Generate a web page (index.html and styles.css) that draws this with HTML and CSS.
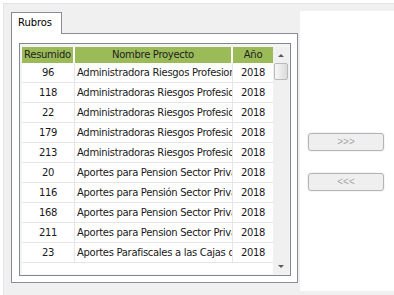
FILE: index.html
```
<!DOCTYPE html>
<html lang="es">
<head>
    <meta charset="UTF-8">
    <meta name="viewport" content="width=device-width, initial-scale=1.0">
    <title>Rubros</title>
    <link rel="stylesheet" href="styles.css">
</head>
<body>
    <div class="frame">
        <div class="main">
            <div class="tabs">
                <div class="strip">
                    <div class="tab">Rubros</div>
                    <div class="fill"></div>
                </div>
                <div class="panel">
                    <div class="grid-box">
                        <div class="grid-view">
                            <table class="grid">
                                <colgroup>
                                    <col class="c-num">
                                    <col class="c-name">
                                    <col class="c-year">
                                </colgroup>
                                <thead>
                                    <tr><th>Resumido</th><th>Nombre Proyecto</th><th>Año</th></tr>
                                </thead>
                                <tbody>
                                    <tr><td>96</td><td class="name">Administradora Riesgos Profesionales</td><td>2018</td></tr>
                                    <tr><td>118</td><td class="name">Administradoras Riesgos Profesionales</td><td>2018</td></tr>
                                    <tr><td>22</td><td class="name">Administradoras Riesgos Profesionales</td><td>2018</td></tr>
                                    <tr><td>179</td><td class="name">Administradoras Riesgos Profesionales</td><td>2018</td></tr>
                                    <tr><td>213</td><td class="name">Administradoras Riesgos Profesionales</td><td>2018</td></tr>
                                    <tr><td>20</td><td class="name">Aportes para Pension Sector Privado</td><td>2018</td></tr>
                                    <tr><td>116</td><td class="name">Aportes para Pensión Sector Privado</td><td>2018</td></tr>
                                    <tr><td>168</td><td class="name">Aportes para Pension Sector Privado</td><td>2018</td></tr>
                                    <tr><td>211</td><td class="name">Aportes para Pension Sector Privado</td><td>2018</td></tr>
                                    <tr><td>23</td><td class="name">Aportes Parafiscales a las Cajas de Compensación</td><td>2018</td></tr>
                                </tbody>
                            </table>
                        </div>
                        <div class="vscroll">
                            <div class="arrow"><span class="tri up"></span></div>
                            <div class="thumb"></div>
                            <div class="track"></div>
                            <div class="arrow"><span class="tri down"></span></div>
                        </div>
                    </div>
                </div>
            </div>
            <div class="side">
                <button class="move">&gt;&gt;&gt;</button>
                <button class="move">&lt;&lt;&lt;</button>
            </div>
        </div>
    </div>
</body>
</html>
```

FILE: styles.css
```
* {
    box-sizing: border-box;
}
html, body {
    margin: 0;
    background: #fff;
}
body {
    font-family: "DejaVu Sans", sans-serif;
    font-size: 10px;
    color: #1a1a1a;
}
.frame {
    margin: 3px 0 0 3px;
    height: 292px;
    border-top: 1px solid #e3e3e3;
    border-left: 1px solid #e3e3e3;
    background: #f0f0f0;
    padding: 7px 0 4px 0;
}
.main {
    display: flex;
    height: 280px;
}
.tabs {
    width: 296px;
    padding-left: 7px;
}
.strip {
    display: flex;
    width: 287px;
    height: 23px;
}
.tab {
    margin-top: 1px;
    width: 51px;
    height: 22px;
    border: 1px solid #898c95;
    border-bottom: none;
    background: #fff;
    padding-left: 6px;
    line-height: 20px;
    color: #000;
    letter-spacing: -0.1px;
}
.fill {
    flex: 1;
    border-bottom: 1px solid #898c95;
}
.panel {
    width: 287px;
    height: 249px;
    border: 1px solid #898c95;
    border-top: none;
    background: #fff;
    padding: 9px 6px 6px 7px;
}
.grid-box {
    display: flex;
    height: 233px;
    border: 1px solid #828790;
    background: #f4f4f4;
    padding: 3px 1px 1px 2px;
}
.grid-view {
    width: 251px;
    background: #fff;
    overflow: hidden;
}
.grid {
    width: 251px;
    table-layout: fixed;
    border-collapse: separate;
    border-spacing: 0;
    letter-spacing: -0.3px;
}
.c-num { width: 53px; }
.c-name { width: 158px; }
.c-year { width: 40px; }
.grid th {
    height: 16px;
    padding: 0;
    background: #9bbb59;
    font-weight: normal;
    color: #1e1e1e;
    text-align: center;
    border-right: 2px solid #fff;
    line-height: 16px;
}
.grid th:last-child {
    border-right: none;
}
.grid tbody tr {
    height: 20px;
}
.grid td {
    padding: 0;
    text-align: center;
    line-height: 19px;
    border-bottom: 1px solid #e6e6e6;
    border-right: 1px solid #e6e6e6;
    white-space: nowrap;
    overflow: hidden;
}
.grid td:last-child {
    border-right: none;
}
.grid td.name {
    text-align: left;
    padding-left: 2px;
    text-overflow: clip;
}
.vscroll {
    width: 16px;
    display: flex;
    flex-direction: column;
    background: #f0f0f0;
}
.arrow {
    height: 16px;
    display: flex;
    align-items: center;
    justify-content: center;
}
.tri {
    width: 0;
    height: 0;
    border-left: 3px solid transparent;
    border-right: 3px solid transparent;
}
.tri.up {
    border-bottom: 3px solid #5a5a5a;
}
.tri.down {
    border-top: 3px solid #5a5a5a;
}
.thumb {
    height: 17px;
    margin: 0 1px;
    border: 1px solid #b9b9b9;
    border-radius: 2px;
    background: linear-gradient(to right, #f8f8f8, #dadada);
}
.track {
    flex: 1;
}
.side {
    flex: 1;
    background: #fff;
    padding: 122px 0 0 8px;
}
.move {
    display: block;
    width: 76px;
    height: 18px;
    margin: 0 0 22px 0;
    padding: 0;
    border: 1px solid #b4b4b4;
    border-radius: 3px;
    background: #efefef;
    box-shadow: 0 0 0 1px #f5f5f5;
    color: #a6a6a6;
    font-family: "Liberation Sans", sans-serif;
    font-size: 10px;
    line-height: 16px;
}
```
